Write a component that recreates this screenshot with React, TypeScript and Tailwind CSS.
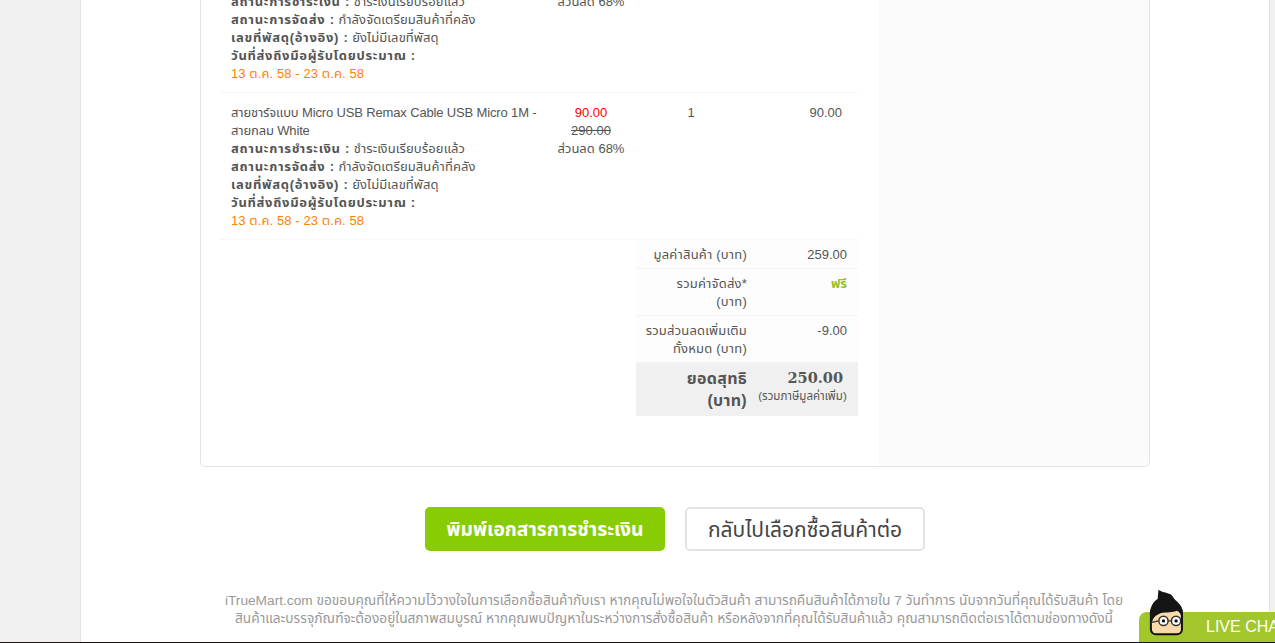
const font = "font-['Liberation_Sans','Noto_Sans_Thai','DejaVu_Sans',sans-serif]";

function OrderStatus() {
  return (
    <div className="tracking-[0.1px]">
      <div><b className="tracking-[0.7px]">สถานะการชำระเงิน :</b> ชำระเงินเรียบร้อยแล้ว</div>
      <div><b className="tracking-[0.7px]">สถานะการจัดส่ง :</b> กำลังจัดเตรียมสินค้าที่คลัง</div>
      <div><b className="tracking-[0.7px]">เลขที่พัสดุ(อ้างอิง) :</b> ยังไม่มีเลขที่พัสดุ</div>
      <div><b className="tracking-[0.7px]">วันที่ส่งถึงมือผู้รับโดยประมาณ :</b></div>
      <div className="text-[#ff7f00]">13 ต.ค. 58 - 23 ต.ค. 58</div>
    </div>
  );
}

function ItemRow({ clipped }: { clipped?: boolean }) {
  return (
    <div className={clipped ? "-mt-[54px] flex w-[637px] border-b border-dotted border-[#eeeeee] pt-[11px] pb-[9px]" : "flex w-[637px] border-b border-dotted border-[#eeeeee] pt-[11px] pb-[9px]"}>
      <div className="w-[316px] pl-[10px]">
        <div className="tracking-[-0.15px] whitespace-nowrap">สายชาร์จแบบ Micro USB Remax Cable USB Micro 1M -<br />สายกลม White</div>
        <OrderStatus />
      </div>
      <div className="w-[108px] text-center">
        <div className="text-[#ff0000]">90.00</div>
        <div className="line-through">290.00</div>
        <div>ส่วนลด 68%</div>
      </div>
      <div className="w-[92px] text-center">1</div>
      <div className="w-[105px] text-right">90.00</div>
    </div>
  );
}

function SummaryRow({ label, value, green }: { label: React.ReactNode; value: string; green?: boolean }) {
  return (
    <div className="flex border-b border-[#f3f3f3] bg-[#fdfdfd]">
      <div className="w-[111px] pt-[6px] pb-[4px] text-right tracking-[0.2px] whitespace-nowrap">{label}</div>
      <div className={green ? "flex-1 pt-[6px] pb-[4px] pr-[11px] text-right font-bold text-[#97c11f]" : "flex-1 pt-[6px] pb-[4px] pr-[11px] text-right"}>{value}</div>
    </div>
  );
}

function Mascot() {
  return (
    <svg viewBox="0 0 40 56" className="absolute bottom-[7px] left-[10px] h-[47px] w-[34px]">
      <rect x="2" y="22" width="37" height="32" rx="6" fill="#fbd9a8" stroke="#111" strokeWidth="2.4" />
      <path d="M1 33 C0 22 5 15 10 12 L11 1 C16 5 25 4 28 9 C31 15 40 18 40 28 L39 36 C38 30 36 27 33 26 C25 29 17 27 11 30 C7 32 4 34 3 42 Z" fill="#151515" />
      <circle cx="17" cy="38" r="5.5" fill="#fff" stroke="#333" strokeWidth="1.8" />
      <circle cx="32" cy="38" r="5.5" fill="#fff" stroke="#333" strokeWidth="1.8" />
      <circle cx="17" cy="38" r="2" fill="#111" />
      <circle cx="32" cy="38" r="2" fill="#111" />
      <path d="M2 40 L11 38 M23 38 L26 38" stroke="#333" strokeWidth="1.4" />
    </svg>
  );
}

export default function App() {
  return (
    <div className={`${font} relative h-[643px] w-[1275px] overflow-hidden bg-[#f0f0f0] text-[13px] leading-[18px] text-[#555555]`}>
      <div className="ml-[80px] h-[642px] w-[1190px] border-x border-[#e3e3e3] bg-white">
        <div className="ml-[119px] flex h-[467px] w-[950px] overflow-hidden rounded-b-[5px] border border-t-0 border-[#e3e3e3]">
          <div className="w-[678px] pl-[20px]">
            <ItemRow clipped />
            <ItemRow />
            <div className="ml-[415px] w-[222px]">
              <SummaryRow label="มูลค่าสินค้า (บาท)" value="259.00" />
              <SummaryRow label={<>รวมค่าจัดส่ง*<br />(บาท)</>} value="ฟรี" green />
              <SummaryRow label={<>รวมส่วนลดเพิ่มเติม<br />ทั้งหมด (บาท)</>} value="-9.00" />
              <div className="flex h-[53px] bg-[#f0f0f0]">
                <div className="w-[111px] pt-[5px] text-right text-[16px] leading-[22px] font-bold tracking-[0.3px]">ยอดสุทธิ<br />(บาท)</div>
                <div className="flex-1 pt-[5px]">
                  <div className="pr-[15px] text-right font-['DejaVu_Serif',serif] text-[14.5px] leading-[20px] font-bold">250.00</div>
                  <div className="pt-[1px] text-center text-[11.5px] leading-[14px] whitespace-nowrap">(รวมภาษีมูลค่าเพิ่ม)</div>
                </div>
              </div>
            </div>
          </div>
          <div className="flex-1 bg-[#fafafa]" />
        </div>
        <div className="mt-[40px] flex justify-center gap-[20px]">
          <button type="button" className="h-[44px] w-[240px] rounded-[5px] bg-[#88cc06] pt-[1px] text-[19.3px] font-bold text-white">พิมพ์เอกสารการชำระเงิน</button>
          <button type="button" className="h-[44px] w-[240px] rounded-[5px] border-2 border-[#e3e3e3] bg-white pt-[1px] text-[21px] text-[#444444]">กลับไปเลือกซื้อสินค้าต่อ</button>
        </div>
        <p className="mx-auto mt-[41px] w-[930px] pr-[2px] text-center text-[13.7px] leading-[18px] whitespace-nowrap text-[#999999]">
          iTrueMart.com ขอขอบคุณที่ให้ความไว้วางใจในการเลือกซื้อสินค้ากับเรา หากคุณไม่พอใจในตัวสินค้า สามารถคืนสินค้าได้ภายใน 7 วันทำการ นับจากวันที่คุณได้รับสินค้า โดย
          <br />
          สินค้าและบรรจุภัณฑ์จะต้องอยู่ในสภาพสมบูรณ์ หากคุณพบปัญหาในระหว่างการสั่งซื้อสินค้า หรือหลังจากที่คุณได้รับสินค้าแล้ว คุณสามารถติดต่อเราได้ตามช่องทางดังนี้
        </p>
      </div>
      <div className="absolute inset-x-0 bottom-0 h-px bg-[#1a1512]" />
      <div className="absolute right-0 bottom-[1px] h-[30px] w-[136px] rounded-tl-[8px] bg-[#a2c72d] pl-[67px] text-[16px] leading-[30px] whitespace-nowrap text-white">
        LIVE CHAT
      </div>
      <div className="absolute right-[86px] bottom-0 h-[59px] w-[50px]"><Mascot /></div>
    </div>
  );
}
